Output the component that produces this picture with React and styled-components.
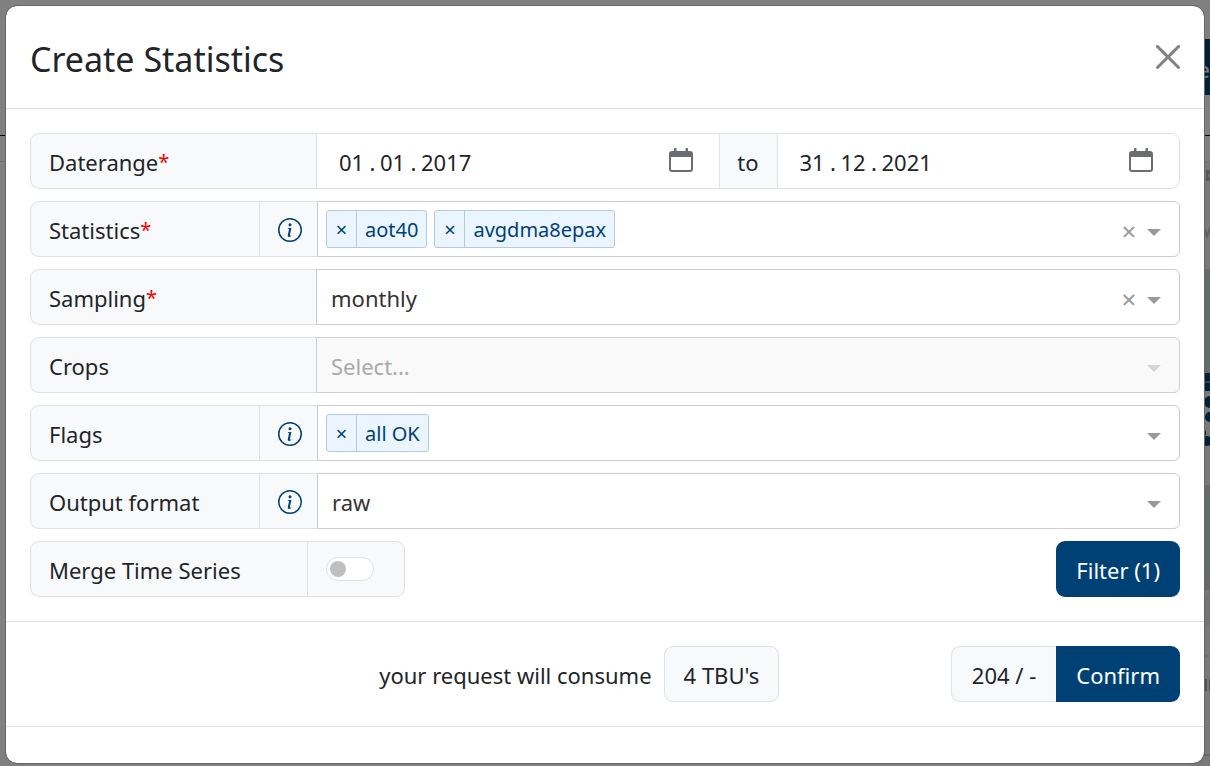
import { useState } from 'react';
import styled, { createGlobalStyle, css } from 'styled-components';
import { BsInfoCircle } from 'react-icons/bs';

const GlobalStyle = createGlobalStyle`
  *, *::before, *::after {
    box-sizing: border-box;
  }

  body {
    margin: 0;
    overflow-x: hidden;
    background-color: #808080;
    color: #212529;
    font-family: 'Noto Sans', 'Open Sans', sans-serif;
    font-size: 22px;
    line-height: 36px;
  }

  button, input, select {
    margin: 0;
    font: inherit;
    color: inherit;
  }
`;

const Screen = styled.div`
  display: grid;
  grid-template-columns: minmax(0, 1fr);
  min-height: 100vh;
`;

const DimmedPage = styled.div`
  grid-area: 1 / 1;
  display: flex;
  flex-direction: column;
  align-items: stretch;
  background-color: #808080;
`;

const DimmedHeader = styled.div`
  display: flex;
  justify-content: flex-end;
  align-items: center;
  height: 136px;
  border-bottom: 1px solid #000000;
`;

const DimmedButton = styled.div`
  width: 32px;
  height: 56px;
  margin-bottom: 2px;
  padding: 12px 0 0;
  text-align: right;
  color: #808080;
  background-color: #00213b;
`;

const DimmedToolbar = styled.div`
  height: 26px;
  border-bottom: 1px solid #6f7173;
`;

const DimmedMap = styled.svg`
  align-self: flex-end;
  width: 20px;
  height: 604px;
`;

const Modal = styled.form`
  grid-area: 1 / 1;
  align-self: start;
  margin: 5px 5px 2px;
  border: 1px solid #666666;
  border-radius: 12px;
  background-color: #ffffff;
  background-clip: padding-box;
`;

const ModalHeader = styled.header`
  display: flex;
  justify-content: space-between;
  align-items: center;
  height: 103px;
  padding: 0 24px;
  border-bottom: 1px solid #dee2e6;
`;

const Title = styled.h1`
  margin: 4px 0 0;
  font-size: 34px;
  font-weight: 400;
  line-height: 54px;
`;

const CloseButton = styled.button`
  display: flex;
  padding: 0;
  border: 0;
  background: none;
  color: #808080;
  cursor: pointer;
`;

const ModalBody = styled.div`
  display: flex;
  flex-direction: column;
  gap: 12px;
  padding: 24px;
`;

const Row = styled.div`
  display: flex;
  justify-content: ${({ $spread }) => ($spread ? 'space-between' : 'flex-start')};
  height: 56px;
`;

const Group = styled.div`
  display: flex;
  height: 56px;
`;

const cell = css`
  display: flex;
  align-items: center;
  padding: 2px 18px 0;
  border: 1px solid #dee2e6;
  background-color: #f8f9fa;
  white-space: nowrap;
`;

const Label = styled.label`
  ${cell}
  flex: 0 0 ${({ $width }) => $width || 286}px;
  border-right: 0;
  border-radius: 9px 0 0 9px;
`;

const Required = styled.span`
  color: #f00000;
  font-size: 20px;
`;

const InfoButton = styled.button`
  ${cell}
  flex: 0 0 58px;
  justify-content: center;
  padding: 2px 0 0 2px;
  border-right: 0;
  color: #004175;
  cursor: pointer;

  svg {
    width: 24px;
    height: 24px;
  }
`;

const RangeText = styled.span`
  ${cell}
  flex: 0 0 58px;
  justify-content: center;
  padding: 2px 0 0;
  border-right: 0;
`;

const DateField = styled.div`
  display: flex;
  flex: 1;
  align-items: center;
  min-width: 0;
  padding: 0 26px 0 22px;
  border: 1px solid #dee2e6;
  border-right-width: ${({ $last }) => ($last ? 1 : 0)}px;
  border-radius: ${({ $last }) => ($last ? '0 9px 9px 0' : 0)};
`;

const DatePart = styled.input`
  width: ${({ $long }) => ($long ? 52 : 26)}px;
  height: 54px;
  padding: 2px 0 0;
  border: 0;
  outline: 0;
  background: none;
`;

const DateDot = styled.span`
  width: 15px;
  padding-top: 2px;
  text-align: center;
`;

const CalendarButton = styled.button`
  display: flex;
  margin: 0 0 2px auto;
  padding: 0;
  border: 0;
  background: none;
  color: #6b6d70;
`;

const SelectBox = styled.div`
  display: flex;
  flex: 1;
  align-items: center;
  min-width: 0;
  padding-right: 18px;
  border: 1px solid ${({ $disabled }) => ($disabled ? '#cfcfcf' : '#cccccc')};
  border-radius: 0 6px 6px 0;
  background-color: ${({ $disabled }) => ($disabled ? '#f9f9f9' : '#ffffff')};
`;

const NativeSelect = styled.select`
  flex: 1;
  min-width: 0;
  height: 54px;
  padding: 2px 0 0 14px;
  border: 0;
  outline: 0;
  appearance: none;
  background: none;
  color: #333333;

  &:disabled {
    color: #aaaaaa;
    opacity: 1;
  }
`;

const Tags = styled.div`
  display: flex;
  flex: 1;
  gap: 7px;
  min-width: 0;
  height: 54px;
  padding: 8px;
`;

const Tag = styled.span`
  display: flex;
  height: 38px;
  border: 1px solid #b2cbe3;
  border-radius: 3px;
  background-color: #ebf5ff;
  color: #004175;
  font-size: 20px;
  line-height: 38px;
`;

const TagRemove = styled.button`
  width: 30px;
  padding: 0;
  border: 0;
  border-right: 1px solid #b2cbe3;
  background: none;
  line-height: 38px;
  cursor: pointer;
`;

const TagText = styled.span`
  padding: 0 8px;
`;

const TagInput = styled.input`
  flex: 1;
  min-width: 0;
  border: 0;
  outline: 0;
  background: none;
`;

const ClearButton = styled.button`
  width: 18px;
  margin-right: 9px;
  padding: 4px 0 0;
  border: 0;
  background: none;
  color: #999999;
  font-size: 26px;
  cursor: pointer;
`;

const Arrow = styled.svg`
  flex: none;
  width: 14px;
  height: 7px;
  margin-top: 6px;
  fill: ${({ $disabled }) => ($disabled ? '#d6d6d6' : '#999999')};
`;

const SwitchCell = styled.div`
  ${cell}
  flex: 0 0 98px;
  padding: 0 18px;
  border-radius: 0 9px 9px 0;
`;

const Switch = styled.input.attrs({ type: 'checkbox', role: 'switch' })`
  display: flex;
  align-items: center;
  width: 48px;
  height: 24px;
  padding: 0 3px;
  border: 1px solid #dee2e6;
  border-radius: 12px;
  appearance: none;
  background-color: #ffffff;

  &::before {
    content: '';
    width: 16px;
    height: 16px;
    border-radius: 50%;
    background-color: #bfbfbf;
  }

  &:checked {
    justify-content: flex-end;
    background-color: #004175;
  }
`;

const PrimaryButton = styled.button`
  height: 56px;
  padding: 2px 20px 0;
  border: 0;
  border-radius: ${({ $attached }) => ($attached ? '0 9px 9px 0' : '9px')};
  background-color: #004175;
  color: #ffffff;
  white-space: nowrap;
  cursor: pointer;

  &:hover {
    background-color: #00345e;
  }
`;

const Summary = styled.footer`
  display: grid;
  grid-template-columns: 2fr 1fr;
  gap: 26px;
  padding: 24px;
  border-top: 1px solid #dee2e6;
  border-bottom: 1px solid #dee2e6;
`;

const SummaryPart = styled.div`
  display: flex;
  justify-content: flex-end;
  align-items: center;
`;

const SummaryText = styled.span`
  margin-right: 12px;
  padding-top: 2px;
  white-space: nowrap;
`;

const Badge = styled.span`
  ${cell}
  justify-content: center;
  height: 56px;
  padding: 2px ${({ $attached }) => ($attached ? 20 : 19)}px 0;
  border-radius: ${({ $attached }) => ($attached ? '9px 0 0 9px' : '9px')};
  border-right-width: ${({ $attached }) => ($attached ? 0 : 1)}px;
`;

const ModalEnd = styled.div`
  height: 36px;
`;

function CalendarIcon() {
  return (
    <svg width="24" height="24" viewBox="0 0 24 24" fill="currentColor">
      <path
        fillRule="evenodd"
        d="M5 1a1 1 0 0 1 2.500 0v2h9V1a1 1 0 0 1 2.500 0v2h2a3 3 0 0 1 3 3v15a3 3 0 0 1-3 3H3a3 3 0 0 1-3-3V6a3 3 0 0 1 3-3h2zM2 9v12a1 1 0 0 0 1 1h18a1 1 0 0 0 1-1V9z"
      />
    </svg>
  );
}

function DateInput({ id, name, value, last }) {
  const [parts, setParts] = useState(value);
  const change = (index) => (e) =>
    setParts(parts.map((part, i) => (i === index ? e.target.value : part)));

  return (
    <DateField $last={last}>
      <DatePart id={id} aria-label={`${name} day`} value={parts[0]} onChange={change(0)} />
      <DateDot>.</DateDot>
      <DatePart aria-label={`${name} month`} value={parts[1]} onChange={change(1)} />
      <DateDot>.</DateDot>
      <DatePart $long aria-label={`${name} year`} value={parts[2]} onChange={change(2)} />
      <CalendarButton type="button" aria-label={`Pick ${name} date`}>
        <CalendarIcon />
      </CalendarButton>
    </DateField>
  );
}

function Info({ topic }) {
  return (
    <InfoButton type="button" aria-label={`About ${topic}`}>
      <BsInfoCircle />
    </InfoButton>
  );
}

function Indicators({ onClear, disabled }) {
  return (
    <>
      {onClear && (
        <ClearButton type="button" aria-label="Clear" onClick={onClear}>
          ×
        </ClearButton>
      )}
      <Arrow viewBox="0 0 14 7" $disabled={disabled}>
        <path d="M0 0h14L7 7z" />
      </Arrow>
    </>
  );
}

function SingleSelect({ id, initial, clearable, disabled }) {
  const [value, setValue] = useState(initial);

  return (
    <SelectBox $disabled={disabled}>
      <NativeSelect
        id={id}
        value={value}
        disabled={disabled}
        onChange={(e) => setValue(e.target.value)}
      >
        {initial && <option value={initial}>{initial}</option>}
        {(!initial || clearable) && <option value="">Select...</option>}
      </NativeSelect>
      <Indicators onClear={clearable ? () => setValue('') : null} disabled={disabled} />
    </SelectBox>
  );
}

function MultiSelect({ id, initial, clearable }) {
  const [values, setValues] = useState(initial);

  return (
    <SelectBox>
      <Tags>
        {values.map((value) => (
          <Tag key={value}>
            <TagRemove
              type="button"
              aria-label={`Remove ${value}`}
              onClick={() => setValues(values.filter((v) => v !== value))}
            >
              ×
            </TagRemove>
            <TagText>{value}</TagText>
          </Tag>
        ))}
        <TagInput id={id} role="combobox" aria-expanded="false" />
      </Tags>
      <Indicators onClear={clearable ? () => setValues([]) : null} />
    </SelectBox>
  );
}

function Backdrop() {
  return (
    <DimmedPage aria-hidden="true">
      <DimmedHeader>
        <DimmedButton>e</DimmedButton>
      </DimmedHeader>
      <DimmedToolbar />
      <DimmedMap viewBox="0 0 20 604">
        <rect width="20" height="604" fill="#7b7878" />
        <rect y="107" width="20" height="104" fill="#656a6a" />
        <rect y="323" width="20" height="105" fill="#656a6a" />
        <path d="M20 428c-6 4-7 10-5 16v20h5z" fill="#747474" />
        <path d="M17 8v11M20 8l-3 6 3 5" fill="none" stroke="#54585b" strokeWidth="2" />
        <path d="M14 66l3 8 3-8" fill="none" stroke="#5f6163" strokeWidth="2" />
        <path d="M12 211h8v18h-8z" fill="#00213b" />
        <g fill="#00213b">
          <circle cx="14" cy="215" r="4" />
          <circle cx="20" cy="240" r="6" />
          <circle cx="20" cy="255" r="5" />
          <circle cx="12" cy="271" r="4" />
          <circle cx="17" cy="279" r="5" />
          <circle cx="12" cy="291" r="3" />
        </g>
        <path d="M15 220h5" stroke="#5c6b78" />
        <path d="M14 494h6" stroke="#696969" />
        <path d="M15 517h2v12h-2zM19 517h1v12h-1z" fill="#505357" />
        <path d="M14 593h6" stroke="#5c5c5c" />
      </DimmedMap>
    </DimmedPage>
  );
}

export default function App() {
  return (
    <>
      <GlobalStyle />
      <Screen>
        <Backdrop />
        <Modal
          role="dialog"
          aria-labelledby="modal-title"
          onSubmit={(e) => e.preventDefault()}
        >
          <ModalHeader>
            <Title id="modal-title">Create Statistics</Title>
            <CloseButton type="button" aria-label="Close">
              <svg width="24" height="24" viewBox="0 0 16 16" fill="currentColor">
                <path d="M.293.293a1 1 0 0 1 1.414 0L8 6.586 14.293.293a1 1 0 1 1 1.414 1.414L9.414 8l6.293 6.293a1 1 0 0 1-1.414 1.414L8 9.414l-6.293 6.293a1 1 0 0 1-1.414-1.414L6.586 8 .293 1.707a1 1 0 0 1 0-1.414z" />
              </svg>
            </CloseButton>
          </ModalHeader>

          <ModalBody>
            <Row>
              <Label htmlFor="date-from">
                Daterange<Required>*</Required>
              </Label>
              <DateInput id="date-from" name="start" value={['01', '01', '2017']} />
              <RangeText>to</RangeText>
              <DateInput id="date-to" name="end" value={['31', '12', '2021']} last />
            </Row>
            <Row>
              <Label htmlFor="statistics" $width={229}>
                Statistics<Required>*</Required>
              </Label>
              <Info topic="statistics" />
              <MultiSelect id="statistics" initial={['aot40', 'avgdma8epax']} clearable />
            </Row>
            <Row>
              <Label htmlFor="sampling">
                Sampling<Required>*</Required>
              </Label>
              <SingleSelect id="sampling" initial="monthly" clearable />
            </Row>
            <Row>
              <Label htmlFor="crops">Crops</Label>
              <SingleSelect id="crops" initial="" disabled />
            </Row>
            <Row>
              <Label htmlFor="flags" $width={229}>
                Flags
              </Label>
              <Info topic="flags" />
              <MultiSelect id="flags" initial={['all OK']} />
            </Row>
            <Row>
              <Label htmlFor="format" $width={229}>
                Output format
              </Label>
              <Info topic="output format" />
              <SingleSelect id="format" initial="raw" />
            </Row>
            <Row $spread>
              <Group>
                <Label htmlFor="merge" $width={277}>
                  Merge Time Series
                </Label>
                <SwitchCell>
                  <Switch id="merge" />
                </SwitchCell>
              </Group>
              <PrimaryButton type="button">Filter (1)</PrimaryButton>
            </Row>
          </ModalBody>

          <Summary>
            <SummaryPart>
              <SummaryText>your request will consume</SummaryText>
              <Badge>4 TBU&apos;s</Badge>
            </SummaryPart>
            <SummaryPart>
              <Badge $attached>204 / -</Badge>
              <PrimaryButton type="submit" $attached>
                Confirm
              </PrimaryButton>
            </SummaryPart>
          </Summary>
          <ModalEnd />
        </Modal>
      </Screen>
    </>
  );
}
